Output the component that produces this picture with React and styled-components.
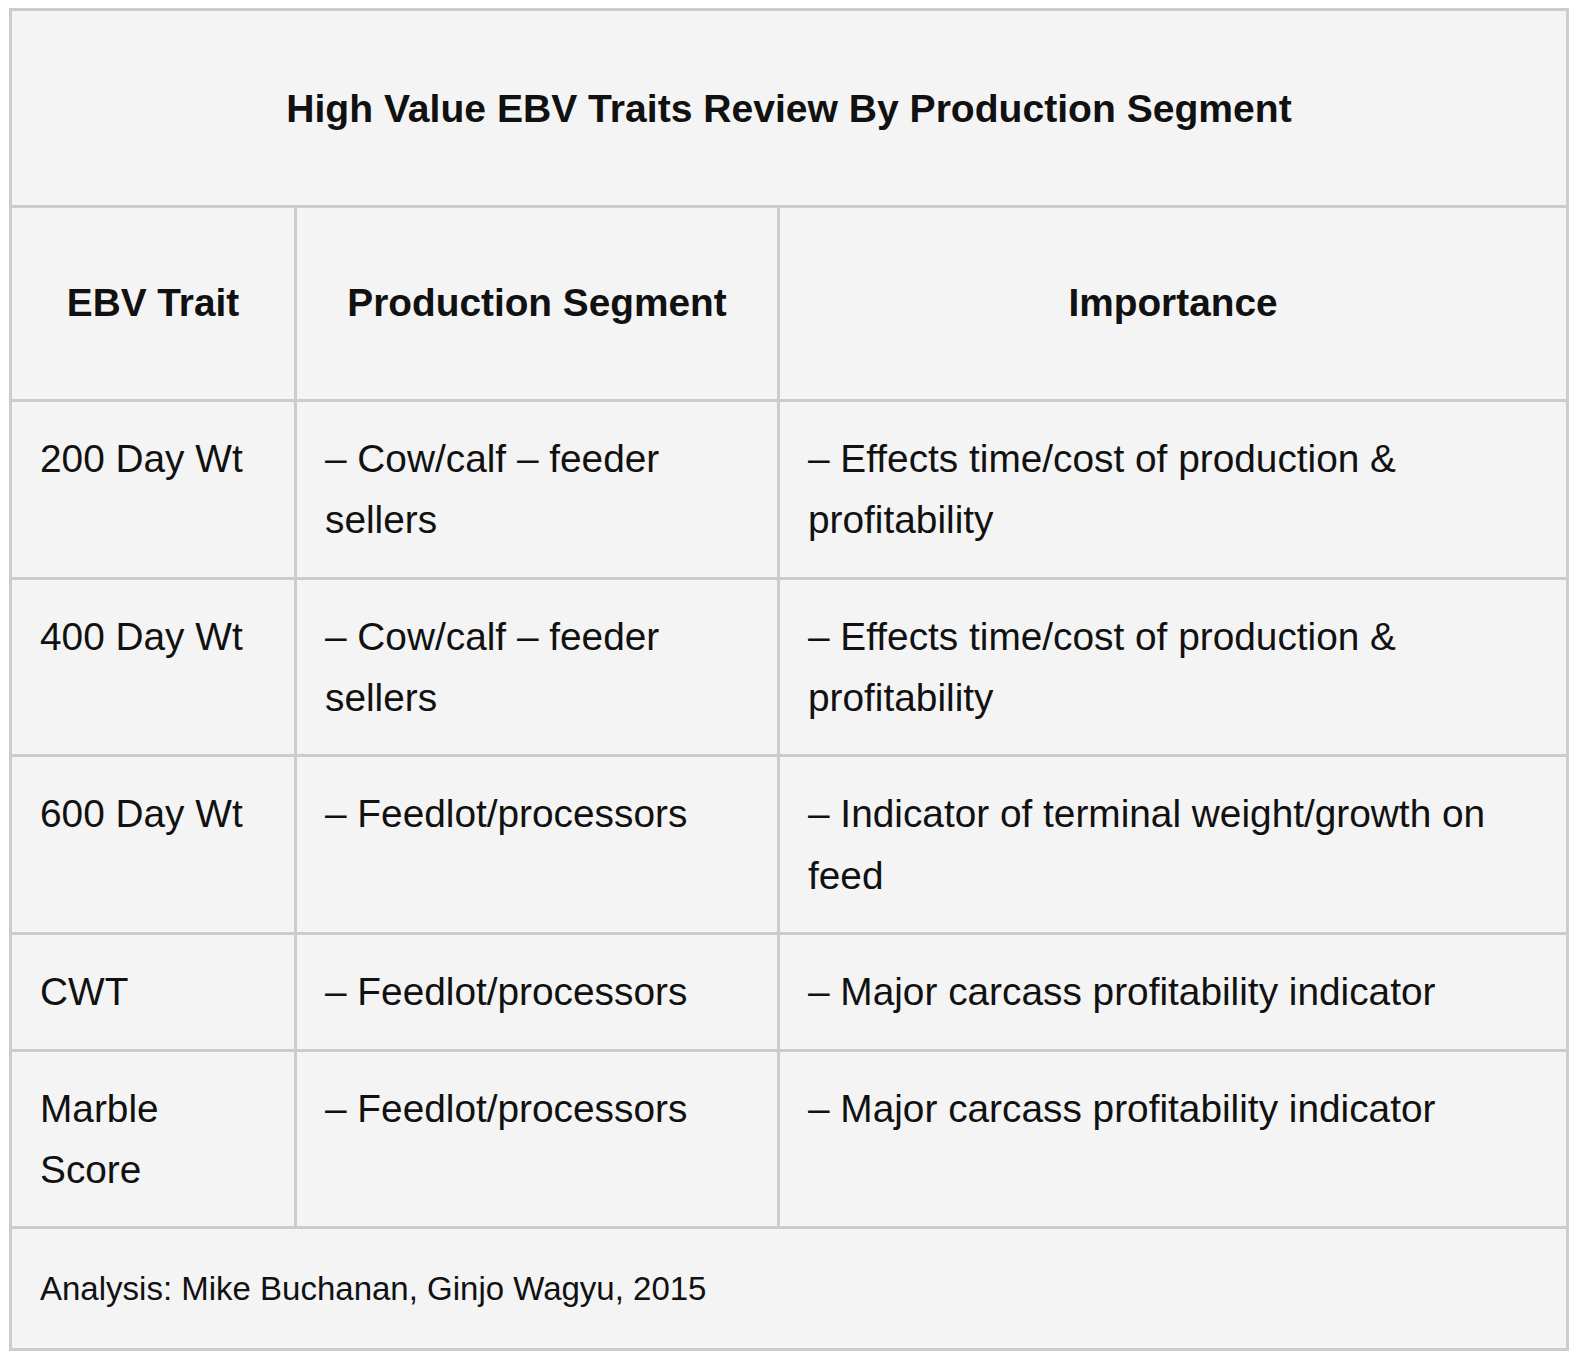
import React from "react";
import styled, { createGlobalStyle } from "styled-components";

const GlobalStyle = createGlobalStyle`
  html, body {
    margin: 0;
    padding: 0;
    background: #ffffff;
  }
  body {
    font-family: "Liberation Sans", Arial, Helvetica, sans-serif;
    color: #111111;
  }
`;

const Page = styled.div`
  padding: 8px 11px 7px 9px;
`;

const Table = styled.table`
  width: 1560px;
  table-layout: fixed;
  border-collapse: collapse;
  background: #f4f4f4;
  border: 3px solid #cccccc;
  font-size: 38.8px;
  line-height: 61.4px;
`;

const Col = styled.col`
  width: ${(p) => p.$w};
`;

const TitleCell = styled.th`
  border: 3px solid #cccccc;
  padding: 67px 28px 66px;
  text-align: center;
  font-weight: 700;
  font-size: 39.1px;
`;

const HeadCell = styled.th`
  border: 3px solid #cccccc;
  padding: 64px 28px 65px;
  text-align: center;
  font-weight: 700;
`;

const Cell = styled.td`
  border: 3px solid #cccccc;
  padding: 26px 28px 26px;
  vertical-align: top;
  text-align: left;
  font-weight: 400;
`;

const FootCell = styled.td`
  border: 3px solid #cccccc;
  padding: 33px 28px 33px;
  font-size: 33px;
  line-height: 53px;
  text-align: left;
`;

const rows = [
  ["200 Day Wt", "– Cow/calf – feeder sellers", "– Effects time/cost of production & profitability"],
  ["400 Day Wt", "– Cow/calf – feeder sellers", "– Effects time/cost of production & profitability"],
  ["600 Day Wt", "– Feedlot/processors", "– Indicator of terminal weight/growth on feed"],
  ["CWT", "– Feedlot/processors", "– Major carcass profitability indicator"],
  ["Marble Score", "– Feedlot/processors", "– Major carcass profitability indicator"],
];

export default function App() {
  return (
    <Page>
      <GlobalStyle />
      <Table>
        <colgroup>
          <Col $w="285px" />
          <Col $w="483px" />
          <Col $w="auto" />
        </colgroup>
        <thead>
          <tr>
            <TitleCell colSpan={3}>High Value EBV Traits Review By Production Segment</TitleCell>
          </tr>
          <tr>
            <HeadCell>EBV Trait</HeadCell>
            <HeadCell>Production Segment</HeadCell>
            <HeadCell>Importance</HeadCell>
          </tr>
        </thead>
        <tbody>
          {rows.map((r) => (
            <tr key={r[0]}>
              <Cell>{r[0]}</Cell>
              <Cell>{r[1]}</Cell>
              <Cell>{r[2]}</Cell>
            </tr>
          ))}
        </tbody>
        <tfoot>
          <tr>
            <FootCell colSpan={3}>Analysis: Mike Buchanan, Ginjo Wagyu, 2015</FootCell>
          </tr>
        </tfoot>
      </Table>
    </Page>
  );
}
